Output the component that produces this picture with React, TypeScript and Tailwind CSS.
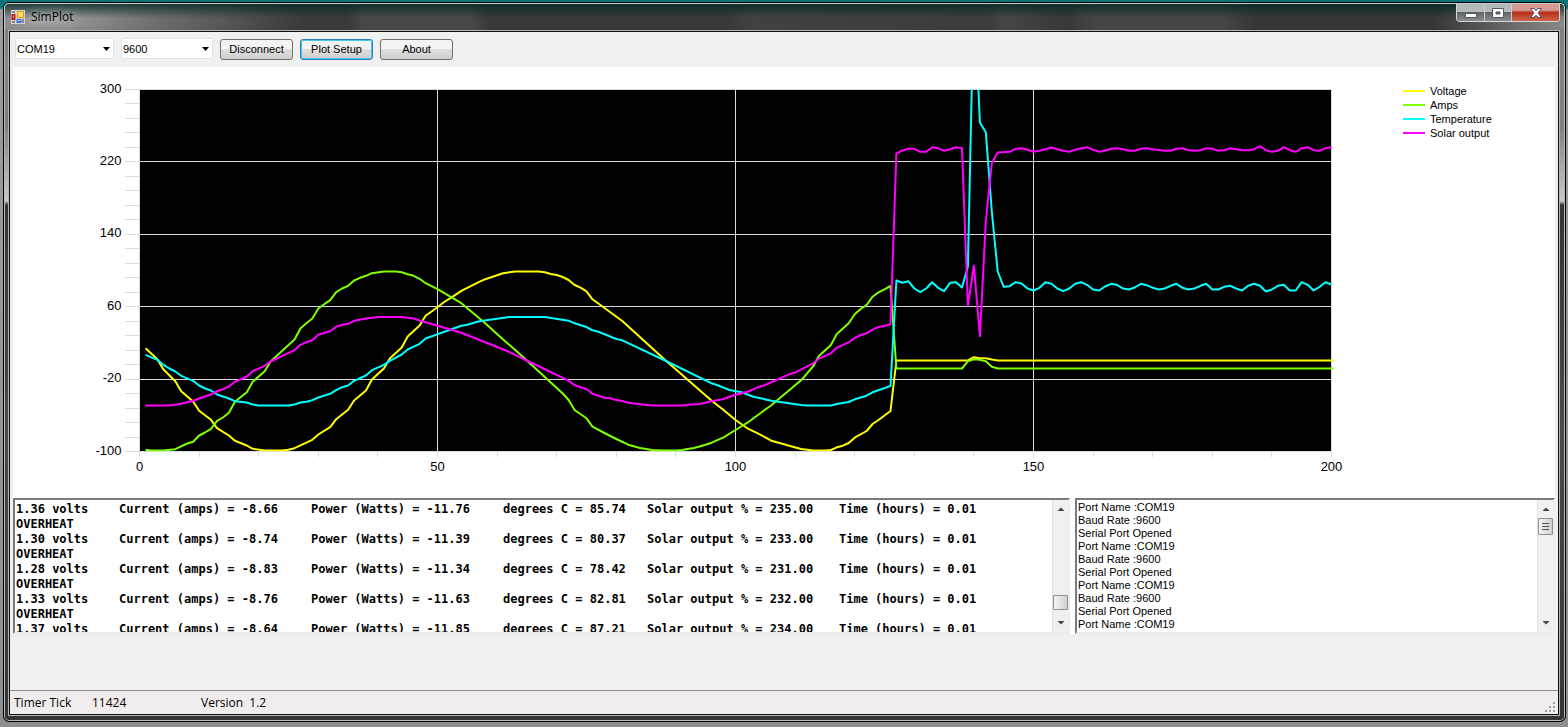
import React from "react";

type Series = { name: string; color: string; swatch: string; points: string };

/* Each point is "sample,depth": the sample number and the distance below the top of the plot. */
const series: Series[] = [
  {
    name: "Voltage",
    color: "#ffff00",
    swatch: "bg-[#ffff00]",
    points:
      "1,258.7 3,269.7 4,279.7 5,285.7 6,291.7 7,301.7 9,312 10,321.3 12,330.3 13,338.7 15,346 16,351.3 18,356 19,359.3 21,361 24,361 25,360.3 26,358.7 29,350.3 30,345 32,337.7 33,329.7 35,320.3 36,311 38,301 39,290 41,279 42,269 44,258 45,247 47,236 48,226.3 50,217.7 51,213 53,205.3 54,201.3 55,198.3 57,192.3 58,189.7 60,185.7 61,183.7 63,182 67,182 68,182.8 69,184.5 70,185.5 71,187.5 72,190.5 73,195.5 74,198.2 75,201.8 76,209.8 81,231.5 88,269.5 96,311.2 98,320.5 100,330.5 102,338.8 104,344.7 105,347.8 106,351.2 108,354.5 109,356.2 111,359.5 113,361 115,361 116,360.5 117,357.8 118,356.2 119,353.5 120,348.2 122,341.5 123,334.5 124,330.5 126,321.5 127,271 139,271 140,267.7 141,268.7 142,268.7 143,270 144,271 200.3,271",
  },
  {
    name: "Amps",
    color: "#7fff00",
    swatch: "bg-[#7fff00]",
    points:
      "1,360.3 2,361 4,361 6,359.7 8,354 9,352.3 10,346 11,343 12,339.3 13,331.3 14,328 15,323.3 16,312.3 18,302.7 19,292.3 21,281.7 22,272 26,250 27,239 28,233.7 29,229 30,219 31,214.7 32,210.7 33,202.7 34,199 35,196.3 36,191 37,188.3 38,186.3 39,183.7 41,182 43,182 44,182.7 45,184.7 46,186.3 47,189.3 48,193.7 50,199.7 54,213.7 56,223.7 58,233.7 61,250 63,260.3 65,271 71,304 72,310.5 73,320.5 75,328.8 76,337.2 78,343.5 80,349.5 82,355.2 84,358.5 86,360.5 88,361 90,361 91,360.5 93,358.5 94,357 96,353.2 98,347.8 100,340.5 102,333.2 104,324.5 106,315.8 108,305.8 110,295.8 111,290.8 113,277 114,266.5 116,255.5 117,244.5 119,233.8 120,224.8 121,219.5 122,215.5 123,207.2 124,202.8 125,199.8 126,196.5 127,279 138,279 139,271.7 140,269.7 141,270.3 142,271.7 143,277.3 144,279 200.3,279",
  },
  {
    name: "Temperature",
    color: "#00ffff",
    swatch: "bg-[#00ffff]",
    points:
      "1,265.3 3,270.3 4,275.3 5,279 6,282 7,286.3 9,291.3 10,296 11,299 12,301 13,305 15,309 16,311.7 18,313 19,315 20,316 25,316 26,315 27,313 28,312.3 29,310.7 30,308 32,304.3 33,300.7 34,297.7 35,296 36,291.3 38,286 39,280.7 41,275.3 42,271.3 44,265 45,260 47,254.3 48,249 50,244.7 54,236.3 55,235.3 57,231.7 60,229.3 62,227.5 68,227.5 72,231.2 73,233.8 75,237.5 76,240.8 77,242.2 80,249.5 81,250.8 88,270.5 96,293.8 97,295.8 99,300.5 101,302.8 103,307.2 106,311.2 109,313.8 111,315.5 112,316 116,316 117,314.5 119,312.5 120,309.8 122,306.2 123,302.8 126,296.5 127,191 128,193.3 129,191.7 130,199 131,202.7 132,199 133,192.7 134,198.3 135,201.7 136,193.3 137,192.7 138,198 139,177 140,-100 141,33 142,42.7 143,122 144,182 145,197.3 146,196.7 147,192.7 148,194 149,199 150,201 151,198.3 152,192.7 153,194.3 154,199 155,201.7 156,199 157,194.3 158,192.7 159,195.3 160,200 161,201 162,197 163,194.3 164,195.3 165,199 166,200 167,198 168,194.3 169,195.7 170,198.3 171,200 172,199 173,196.3 174,194.3 175,198.3 176,200 177,199 178,196.3 179,194.3 180,200 181,200 182,197.3 183,196.3 184,199 185,201 186,196.3 187,194.3 188,196.3 189,202 190,200 191,196.3 192,195.3 193,201 194,201 195,192.7 196,195.3 197,201 198,197.3 199,192.7 200,195",
  },
  {
    name: "Solar output",
    color: "#ff00ff",
    swatch: "bg-[#ff00ff]",
    points:
      "1,316 5,316 7,314.3 9,311.3 10,309 12,305 13,301.7 14,299.7 15,297 16,292.3 18,287 19,281.7 21,276.3 22,272 26,260.7 27,255.3 28,252.7 29,250.7 30,245.3 32,241.7 33,237.3 34,235.3 35,234.3 36,231.3 38,229 40,227.5 44,227.5 46,229 47,231 50,236.3 54,243.3 58,252.7 62,262.3 66,274 72,291.2 73,295.5 74,297.8 75,299.5 76,304.2 78,308.2 79,308.8 80,310.5 81,311.5 82,313.2 84,314.8 86,316 91,316 92,315.2 94,314.5 96,311.8 98,309.5 100,305.2 102,302.2 103,299.8 104,297.2 105,295.5 109,284.8 110,283.2 113,273.8 114,269.2 116,263.8 117,258.2 119,252.8 120,248.5 121,245.5 122,243.8 123,240.2 124,237.5 125,236.5 126,234.8 127,64 128,61 129,59.3 130,59.3 131,62.3 132,62.3 133,57.7 134,58.7 135,61.3 136,59.7 137,57.7 138,58.7 139,216.3 140,176 141,246.7 142,132 143,73.7 144,63 146,62.3 147,59.3 148,58.7 149,60.3 150,62.3 151,61.3 152,59.7 153,58 154,59.7 155,61.3 156,62.3 157,60.3 158,58.7 159,57.7 160,60.3 161,62.3 162,61.3 163,59.3 164,58.7 165,59.7 166,61.3 167,61.3 168,59.3 169,58.7 170,59.7 172,61.3 173,61.3 174,59.3 175,58.7 176,60.7 177,61.3 178,60.7 179,58.7 180,59.3 181,61.3 182,60.7 183,58.7 184,59.7 185,60.7 186,60.7 187,59.7 188,56.7 189,60.7 190,62.3 191,61.3 192,57.7 193,60.7 194,62.3 195,58.7 196,57.7 197,60.7 198,61.3 199,58.7 200,57.7",
  },
];

const LEFT = 126.5;
const TOP = 22.5;
const WIDTH = 1192;
const HEIGHT = 362;
const STEP = WIDTH / 200;

const toCanvas = (points: string) =>
  points
    .split(" ")
    .map((p) => p.split(",").map(Number))
    .map(([n, d]) => `${(LEFT + n * STEP).toFixed(1)},${(TOP + d).toFixed(1)}`)
    .join(" ");

const yLabels = [300, 220, 140, 60, -20, -100];
const xLabels = [0, 50, 100, 150, 200];

function Chart() {
  return (
    <svg viewBox="0 0 1390 431" className="h-auto min-w-0 flex-1" role="img" aria-label="Live data plot">
      <defs>
        <clipPath id="plot-area">
          <rect x={LEFT} y={TOP} width={WIDTH + 3} height={HEIGHT} />
        </clipPath>
      </defs>
      <rect x={LEFT} y={TOP} width={WIDTH} height={HEIGHT} fill="#000" />
      <g stroke="#dcdcdc" strokeWidth="1" shapeRendering="crispEdges">
        {Array.from({ length: 26 }, (_, i) => {
          const y = TOP + Math.round((i * HEIGHT) / 25);
          return <line key={i} x1={LEFT - 15} x2={i % 5 ? LEFT : LEFT + WIDTH} y1={y} y2={y} />;
        })}
        {Array.from({ length: 21 }, (_, i) => {
          const x = LEFT + Math.round((i * WIDTH) / 20);
          return <line key={i} x1={x} x2={x} y1={i % 5 ? TOP + HEIGHT : TOP} y2={TOP + HEIGHT + 5} />;
        })}
      </g>
      <g clipPath="url(#plot-area)" fill="none" strokeWidth="2" strokeLinejoin="round">
        {series.map((s) => (
          <polyline key={s.name} points={toCanvas(s.points)} stroke={s.color} />
        ))}
      </g>
      <g fontSize="13" fill="#000" textAnchor="end">
        {yLabels.map((v, i) => (
          <text key={v} x={LEFT - 18} y={Math.round(TOP + (i * HEIGHT) / 5) + 3}>
            {v}
          </text>
        ))}
      </g>
      <g fontSize="13" fill="#000" textAnchor="middle">
        {xLabels.map((v, i) => (
          <text key={v} x={LEFT + (i * WIDTH) / 4} y={404}>
            {v}
          </text>
        ))}
      </g>
    </svg>
  );
}

const readings = [
  ["1.36", "-8.66", "-11.76", "85.74", "235.00"],
  ["1.30", "-8.74", "-11.39", "80.37", "233.00"],
  ["1.28", "-8.83", "-11.34", "78.42", "231.00"],
  ["1.33", "-8.76", "-11.63", "82.81", "232.00"],
  ["1.37", "-8.64", "-11.85", "87.21", "234.00"],
];

const portLog = [
  ...Array(3).fill("Port Name :COM19\nBaud Rate :9600\nSerial Port Opened"),
  "Port Name :COM19",
].join("\n");

function Arrow({ up }: { up?: boolean }) {
  return (
    <svg viewBox="0 0 8 4" className="h-1 w-2" aria-hidden="true">
      <path d={up ? "M0.5 4 4 0.5 7.5 4z" : "M0.5 0 4 3.5 7.5 0z"} fill="#444" />
    </svg>
  );
}

function ScrollBar({ children, label }: { children: React.ReactNode; label: string }) {
  return (
    <div className="flex w-4 shrink-0 flex-col border-l border-[#e3e3e3] bg-[#f0f0f0]">
      <button type="button" aria-label={`Scroll ${label} up`} className="flex h-[18px] items-center justify-center">
        <Arrow up />
      </button>
      <div className="flex flex-1 flex-col">{children}</div>
      <button type="button" aria-label={`Scroll ${label} down`} className="flex h-[18px] items-center justify-center">
        <Arrow />
      </button>
    </div>
  );
}

const sunken =
  "flex h-[136px] overflow-hidden border-2 border-t-[#7b7b7b] border-r-[#ececec] border-b-[#ececec] border-l-[#7b7b7b] bg-white";

function Combo({ id, label, value, options, width }: { id: string; label: string; value: string; options: string[]; width: string }) {
  return (
    <div className={`relative ${width}`}>
      <label htmlFor={id} className="sr-only">
        {label}
      </label>
      <select
        id={id}
        defaultValue={value}
        className="block h-[21px] w-full appearance-none rounded-[2px] border border-[#dfe3ec] bg-white pl-px text-[11px] leading-[18px] text-black"
      >
        {options.map((o) => (
          <option key={o}>{o}</option>
        ))}
      </select>
      <svg viewBox="0 0 7 4" className="pointer-events-none absolute top-[9px] right-1 h-1 w-[7px]" aria-hidden="true">
        <path d="M0 0h7L3.5 4z" fill="#000" />
      </svg>
    </div>
  );
}

const buttonBase =
  "h-[21px] w-[73px] rounded-[3px] border bg-linear-to-b from-[#f3f3f3] from-45% via-[#e0e0e0] via-50% to-[#cdcdcd] text-center leading-[19px]";

export default function App() {
  return (
    <div className="flex min-h-screen flex-col bg-[linear-gradient(#0c7478_0,#0c7478_8px,#9b9d9f_10px,#8d8f91_100%)] pt-[2px] pr-[2px] pb-[5px] pl-[3px] font-['Liberation_Sans',Arial,sans-serif] text-[11px] text-black">
      <div className="flex flex-1 flex-col rounded-[6px] border border-black bg-[linear-gradient(#777_0,#858585_60px,#7d7d7d_120px,#c9c9c9_198px,#343434_202px,#4a4a4a_60%,#343434_100%)] shadow-[inset_0_0_0_1px_#b9bcbc]">
        <header className="flex h-[27px] items-start justify-between rounded-t-[5px] border-t border-r border-l border-[#c4cccc] bg-[linear-gradient(rgba(0,40,40,0.75),rgba(0,40,40,0)_14px),radial-gradient(ellipse_260px_60px_at_40px_16px,#a2a2a2_0,rgba(130,130,130,0.75)_40%,rgba(80,80,80,0)_100%),radial-gradient(ellipse_130px_60px_at_100%_20px,#8a8a8a_0,rgba(120,120,120,0.8)_40%,rgba(80,80,80,0)_100%),linear-gradient(80deg,#3a3a3a_22%,#474747_23%,#474747_30%,#383838_31%,#383838_46%,#424242_48%,#3c3c3c_63%,#464646_64%,#383838_68%,#464646_70%,#464646_78%,#363636_80%)]">
          <div className="flex items-center gap-[6px] pt-[5px] pl-[6px]">
            <svg viewBox="0 0 14 14" className="size-[14px]" aria-hidden="true">
              <path d="M0 0h14v14H0z" fill="#d3d3d3" />
              <path d="M1 1h3v2H1zM1 11h3v2H1zM11 9h2v4h-2z" fill="#8a8a8a" />
              <path d="M0.5 4h4v6h-4z" fill="#b3241c" />
              <path d="M2 5.500h1v2H2z" fill="#f6a79c" />
              <path d="M6 1h7v7H6z" fill="#e09a10" />
              <path d="M7 2h5v5H7z" fill="#ffe169" />
              <path d="M5.500 9h5v4h-5z" fill="#3b6fd4" />
              <path d="M6.500 10h3v1h-3z" fill="#a9c6f7" />
            </svg>
            <h1 className="font-['Open_Sans','Noto_Sans',sans-serif] text-[12px] leading-4 font-normal [text-shadow:0_0_8px_#ddd]">
              SimPlot
            </h1>
          </div>
          <div className="mr-1 flex h-[18px] overflow-hidden rounded-b-[4px] border border-t-0 border-[#d4d6d8] bg-[#2c2c2c]">
            <button
              type="button"
              aria-label="Minimize"
              className="flex w-7 items-center justify-center border-r border-[#c9cbcd] bg-linear-to-b from-[#b4b9b9] from-45% via-[#5f6464] via-50% to-[#8b8f92]"
            >
              <svg viewBox="0 0 12 10" className="h-[10px] w-3" aria-hidden="true">
                <path d="M0.500 5.500h11v4H0.500z" fill="#fff" stroke="#535666" />
              </svg>
            </button>
            <button
              type="button"
              aria-label="Maximize"
              className="flex w-[27px] items-center justify-center border-r border-[#c9cbcd] bg-linear-to-b from-[#b4b9b9] from-45% via-[#5f6464] via-50% to-[#8b8f92]"
            >
              <svg viewBox="0 0 12 10" className="h-[10px] w-3" aria-hidden="true">
                <path d="M0.500 0.500h11v9H0.500zM4 4v2h4V4z" fill="#fff" fillRule="evenodd" stroke="#535666" />
              </svg>
            </button>
            <button
              type="button"
              aria-label="Close"
              className="flex w-[47px] items-center justify-center bg-linear-to-b from-[#d59a90] from-35% via-[#b5301a] via-50% to-[#d2624a]"
            >
              <svg viewBox="0 0 12 10" className="h-[10px] w-3" aria-hidden="true">
                <path
                  d="M0.500 0.500h3.300L6 2.800 8.200 0.500h3.300L8 5l3.500 4.500H8.200L6 7.200 3.800 9.500H0.500L4 5z"
                  fill="#fff"
                  stroke="#535666"
                />
              </svg>
            </button>
          </div>
        </header>

        <div className="mr-[5px] mb-[5px] ml-1 flex flex-1 flex-col border border-[#b5b7b7]">
          <div className="flex flex-1 flex-col border border-[#111] bg-[#f0f0f0]">
            <div className="flex h-[35px] items-start gap-[7px] pt-[6px] pl-[5px]">
              <Combo id="port" label="Port" value="COM19" options={["COM19"]} width="w-[99px]" />
              <Combo id="baud" label="Baud rate" value="9600" options={["9600"]} width="w-[92px]" />
              <div className="flex gap-[7px] pt-px">
                <button type="button" className={`${buttonBase} border-[#707070]`}>
                  Disconnect
                </button>
                <button type="button" className={`${buttonBase} border-[#2c7fb5] shadow-[inset_0_0_0_1px_#48c4ee]`}>
                  Plot Setup
                </button>
                <button type="button" className={`${buttonBase} border-[#707070]`}>
                  About
                </button>
              </div>
            </div>

            <main className="flex flex-1 flex-col px-[3px]">
              <section className="flex items-start bg-white" aria-label="Chart">
                <Chart />
                <ul className="w-[152px] shrink-0 pt-[17px]">
                  {series.map((s) => (
                    <li key={s.name} className="flex h-[14px] items-center gap-[5px] leading-[14px]">
                      <span className={`h-[2px] w-[22px] ${s.swatch}`} />
                      {s.name}
                    </li>
                  ))}
                </ul>
              </section>

              <div className="flex gap-[5px] bg-white">
                <div className={`${sunken} min-w-0 flex-1`}>
                  <div
                    role="log"
                    aria-label="Readings"
                    className="min-w-0 flex-1 overflow-hidden pt-[2px] pl-px font-['DejaVu_Sans_Mono','Liberation_Mono',monospace] text-[12px] leading-[15px] font-bold whitespace-pre"
                  >
                    {readings.map(([volts, amps, watts, temp, solar], i) => (
                      <React.Fragment key={volts}>
                        <div className="grid grid-cols-[103px_192px_192px_144px_192px_1fr]">
                          <span>{volts} volts</span>
                          <span>Current (amps) = {amps}</span>
                          <span>Power (Watts) = {watts}</span>
                          <span>degrees C = {temp}</span>
                          <span>Solar output % = {solar}</span>
                          <span>Time (hours) = 0.01</span>
                        </div>
                        {i < readings.length - 1 && <div>OVERHEAT</div>}
                      </React.Fragment>
                    ))}
                  </div>
                  <ScrollBar label="readings">
                    <div className="mt-auto mb-[4px] h-[15px] w-[15px] rounded-[1px] border border-[#8f8f8f] bg-linear-to-r from-[#f5f5f5] to-[#cfcfd2]" />
                  </ScrollBar>
                </div>

                <div className={`${sunken} w-[480px] shrink-0`}>
                  <textarea
                    readOnly
                    aria-label="Port messages"
                    defaultValue={portLog}
                    className="block min-w-0 flex-1 resize-none overflow-hidden pt-px pl-px text-[11px] leading-[13px] outline-none"
                  />
                  <ScrollBar label="messages">
                    <div className="flex h-[17px] w-[15px] flex-col items-center justify-center gap-[2px] rounded-[1px] border border-[#8f8f8f] bg-linear-to-r from-[#f5f5f5] to-[#cfcfd2]">
                      <span className="h-px w-[7px] bg-[#555]" />
                      <span className="h-px w-[7px] bg-[#555]" />
                      <span className="h-px w-[7px] bg-[#555]" />
                    </div>
                  </ScrollBar>
                </div>
              </div>
            </main>

            <footer className="flex h-6 items-center border-t border-[#8e8e8e] bg-[#f1eded] pl-1 font-['Open_Sans','Noto_Sans',sans-serif] text-[12px] leading-4 whitespace-pre">
              <span className="w-[78px]">Timer Tick</span>
              <span className="w-[109px]">11424</span>
              <span>Version  1.2</span>
              <svg viewBox="0 0 11 11" className="mr-[2px] mb-px ml-auto size-[11px] self-end" aria-hidden="true">
                <path d="M8 0h2v2H8zM4 4h2v2H4zM8 4h2v2H8zM0 8h2v2H0zM4 8h2v2H4zM8 8h2v2H8z" fill="#a39f9f" />
              </svg>
            </footer>
          </div>
        </div>
      </div>
    </div>
  );
}
